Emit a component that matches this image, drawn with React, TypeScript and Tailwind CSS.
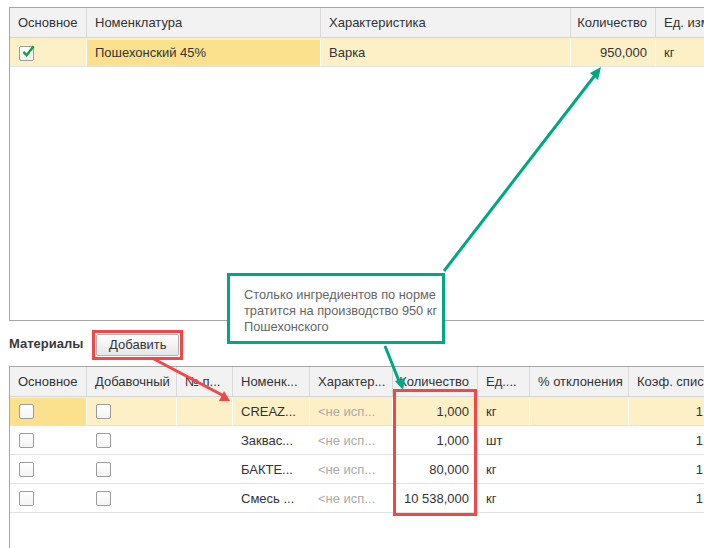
const topCols = [
  { title: "Основное", w: 77 },
  { title: "Номенклатура", w: 234 },
  { title: "Характеристика", w: 250 },
  { title: "Количество", w: 85, right: true },
  { title: "Ед. изм.", w: 120 },
]

const matCols = [
  { title: "Основное", w: 77 },
  { title: "Добавочный", w: 90 },
  { title: "№ п...", w: 56 },
  { title: "Номенк...", w: 77 },
  { title: "Характер...", w: 83 },
  { title: "Количество", w: 85, right: true },
  { title: "Ед....", w: 52 },
  { title: "% отклонения", w: 99 },
  { title: "Коэф. списания", w: 110 },
]

const materials = [
  { name: "CREAZ...", qty: "1,000", unit: "кг" },
  { name: "Заквас...", qty: "1,000", unit: "шт" },
  { name: "БАКТЕ...", qty: "80,000", unit: "кг" },
  { name: "Смесь ...", qty: "10 538,000", unit: "кг" },
]

function Checkbox({ checked }: { checked?: boolean }) {
  return (
    <span className="relative inline-block w-[15px] h-[15px] rounded-[2px] border border-[#9c9c9c] bg-gradient-to-b from-white to-[#f4f4f4]">
      {checked && (
        <svg viewBox="0 0 16 16" className="absolute left-[1px] -top-[3px] w-[15px] h-[15px]">
          <path d="M2.5 8.5 L6 12 L13.5 2.5" fill="none" stroke="#12a03c" strokeWidth="2.6" />
        </svg>
      )}
    </span>
  )
}

function HeaderRow({ cols }: { cols: { title: string; w: number; right?: boolean }[] }) {
  return (
    <div className="flex h-[30px] bg-[#f2f2f2] border-b border-[#d6d6d6]">
      {cols.map((c) => (
        <div
          key={c.title}
          style={{ width: c.w }}
          className={`shrink-0 flex items-center px-[8px] border-r border-[#d9d9d9] whitespace-nowrap overflow-hidden ${
            c.right ? "justify-end" : ""
          }`}
        >
          {c.title}
        </div>
      ))}
    </div>
  )
}

export default function App() {
  return (
    <div className="relative w-[704px] h-[548px] overflow-hidden bg-white text-[13px] text-[#333] font-['Liberation_Sans',Arial,sans-serif]">
      {/* Продукция */}
      <div className="mt-[7px] ml-[9px] h-[314px] border-l border-t border-b border-[#a6a6a6]">
        <HeaderRow cols={topCols} />
        <div className="flex h-[29px] pt-[2px] bg-[#fdf0c6] border-b border-[#e2e2e2]">
          <div className="w-[77px] shrink-0 flex items-center pl-[9px] border-r border-white">
            <Checkbox checked />
          </div>
          <div className="w-[234px] shrink-0 flex items-center px-[8px] bg-[#fbe18e] border-r border-white">
            Пошехонский 45%
          </div>
          <div className="w-[250px] shrink-0 flex items-center px-[8px] border-r border-white">Варка</div>
          <div className="w-[85px] shrink-0 flex items-center justify-end px-[8px] border-r border-white">950,000</div>
          <div className="w-[120px] shrink-0 flex items-center px-[8px]">кг</div>
        </div>
      </div>

      {/* Материалы */}
      <div className="flex items-center h-[45px] pl-[9px] pt-[1px]">
        <span className="font-bold text-[#3a3a3a]">Материалы</span>
        <span className="ml-[9px] mt-[2px] border-[3px] border-[#f24747] p-px">
          <button className="h-[22px] w-[83px] flex items-center justify-center rounded-[2px] border border-[#b4b4b4] bg-gradient-to-b from-white to-[#e6e6e6] text-[#333]">
            Добавить
          </button>
        </span>
      </div>

      <div className="ml-[9px] h-[200px] border-l border-t border-[#a6a6a6]">
        <HeaderRow cols={matCols} />
        {materials.map((m, i) => {
          const sel = i === 0
          const sep = sel ? "border-white" : "border-transparent"
          return (
            <div key={m.name} className={`flex h-[29px] pt-px border-b border-[#e2e2e2] ${sel ? "bg-[#fdf0c6]" : ""}`}>
              <div className={`w-[77px] shrink-0 flex items-center pl-[9px] border-r ${sep} ${sel ? "bg-[#fbe18e]" : ""}`}>
                <Checkbox />
              </div>
              <div className={`w-[90px] shrink-0 flex items-center pl-[9px] border-r ${sep}`}>
                <Checkbox />
              </div>
              <div className={`w-[56px] shrink-0 border-r ${sep}`} />
              <div className={`w-[77px] shrink-0 flex items-center px-[8px] border-r ${sep} whitespace-nowrap`}>{m.name}</div>
              <div className={`w-[83px] shrink-0 flex items-center px-[8px] border-r ${sep} text-[#aaa] whitespace-nowrap`}>
                &lt;не исп...
              </div>
              <div className={`w-[85px] shrink-0 flex items-center justify-end px-[8px] border-r ${sep}`}>{m.qty}</div>
              <div className={`w-[52px] shrink-0 flex items-center px-[8px] border-r ${sep}`}>{m.unit}</div>
              <div className={`w-[99px] shrink-0 border-r ${sep}`} />
              <div className="w-[110px] shrink-0 flex items-center justify-end pr-[36px]">1</div>
            </div>
          )
        })}
      </div>

      {/* Пояснение */}
      <div className="absolute left-[227px] top-[273px] w-[218px] h-[71px] border-[3px] border-[#00a784] bg-white pl-[14px] pt-[11px] text-[12.8px] leading-[16px] text-[#666] whitespace-nowrap">
        Столько ингредиентов по норме
        <br />
        тратится на производство 950 кг
        <br />
        Пошехонского
      </div>

      {/* Выделение количества */}
      <div className="absolute left-[393px] top-[389px] w-[84px] h-[127px] border-[3px] border-[#f24747]" />

      <svg className="absolute inset-0 pointer-events-none" width="704" height="548">
        <line x1="444" y1="271" x2="596" y2="74" stroke="#00a784" strokeWidth="3" />
        <polygon points="601,67 590,73 598,80" fill="#00a784" />
        <line x1="385" y1="346" x2="399" y2="381" stroke="#00a784" strokeWidth="3" />
        <polygon points="403,390 395,381 405,378" fill="#00a784" />
        <line x1="152" y1="358" x2="224" y2="396" stroke="#f24747" strokeWidth="3" />
        <polygon points="230,401 219,401 224,391" fill="#f24747" />
      </svg>
    </div>
  )
}
